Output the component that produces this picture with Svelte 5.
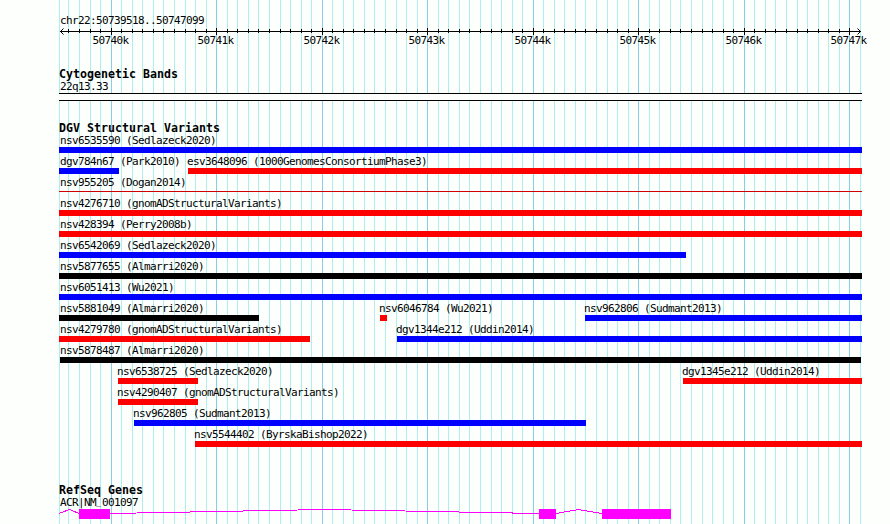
<script>
  const left = 59;
  const right = 862;
  const kb = 105.508;

  // one grid line per 100 bp, a major one per 1000 bp
  const ticks = [];
  for (let i = -5; i <= 71; i++) {
    ticks.push({
      x: Math.max(left, Math.floor(111.2 + (i * kb) / 10)),
      major: i % 10 === 0,
      label: 50740 + i / 10 + 'k'
    });
  }
  const majors = ticks.filter((t) => t.major);
  const inner = ticks.filter((t) => t.x > 62 && t.x < 860);

  const rows = [
    [{ name: 'nsv6535590 (Sedlazeck2020)', start: left, end: right, type: 'loss' }],
    [
      { name: 'dgv784n67 (Park2010)', start: left, end: 119, type: 'loss' },
      { name: 'esv3648096 (1000GenomesConsortiumPhase3)', start: 188, end: right, type: 'gain' }
    ],
    [{ name: 'nsv955205 (Dogan2014)', start: left, end: right, type: 'thin' }],
    [{ name: 'nsv4276710 (gnomADStructuralVariants)', start: left, end: right, type: 'gain' }],
    [{ name: 'nsv428394 (Perry2008b)', start: left, end: right, type: 'gain' }],
    [{ name: 'nsv6542069 (Sedlazeck2020)', start: left, end: 686, type: 'loss' }],
    [{ name: 'nsv5877655 (Almarri2020)', start: left, end: right, type: 'other' }],
    [{ name: 'nsv6051413 (Wu2021)', start: left, end: right, type: 'loss' }],
    [
      { name: 'nsv5881049 (Almarri2020)', start: left, end: 259, type: 'other' },
      { name: 'nsv6046784 (Wu2021)', start: 380, end: 387, type: 'gain' },
      { name: 'nsv962806 (Sudmant2013)', start: 585, end: right, type: 'loss' }
    ],
    [
      { name: 'nsv4279780 (gnomADStructuralVariants)', start: left, end: 310, type: 'gain' },
      { name: 'dgv1344e212 (Uddin2014)', start: 397, end: right, type: 'loss' }
    ],
    [{ name: 'nsv5878487 (Almarri2020)', start: 60, end: 861, type: 'other' }],
    [
      { name: 'nsv6538725 (Sedlazeck2020)', start: 118, end: 198, type: 'gain' },
      { name: 'dgv1345e212 (Uddin2014)', start: 683, end: right, type: 'gain' }
    ],
    [{ name: 'nsv4290407 (gnomADStructuralVariants)', start: 118, end: 198, type: 'gain' }],
    [{ name: 'nsv962805 (Sudmant2013)', start: 134, end: 586, type: 'loss' }],
    [{ name: 'nsv5544402 (ByrskaBishop2022)', start: 195, end: right, type: 'gain' }]
  ];

  const exons = [
    [79, 110],
    [539, 556],
    [602, 671]
  ];
</script>

<div class="browser">
  <svg class="gridlines" width="890" height="524">
    {#each ticks as t}
      <rect class:major={t.major} x={t.x} y="0" width="1" height="524" />
    {/each}
  </svg>

  <div class="ruler">
    <div class="region label">chr22:50739518..50747099</div>
    <svg class="axis" width="890" height="22">
      <g shape-rendering="crispEdges">
        <rect x="60" y="4" width="801" height="1" />
        {#each inner as t}
          <rect x={t.x} y={t.major ? 1 : 2} width="1" height={t.major ? 7 : 4} />
        {/each}
      </g>
      <path d="M63.5 1.5 60.5 4.5 63.5 7.5M857.5 1.5 860.5 4.5 857.5 7.5" />
      {#each majors as t}
        <text x={t.x - 18.4} y="17">{t.label}</text>
      {/each}
    </svg>
  </div>

  <section class="bands">
    <h3>Cytogenetic Bands</h3>
    <div class="label indent">22q13.33</div>
    <div class="band"></div>
  </section>

  <section class="variants">
    <h3>DGV Structural Variants</h3>
    {#each rows as row}
      <div class="row">
        {#each row as v}
          <div class="variant" style="margin-left: {v.start}px">
            <div class="label" class:clipped={v.start === left} class:shifted={v.start > 60}>{v.name}</div>
            <div class="bar {v.type}" style="width: {v.end - v.start}px"></div>
          </div>
        {/each}
      </div>
    {/each}
  </section>

  <section class="genes">
    <h3>RefSeq Genes</h3>
    <div class="label indent">ACR|NM<span class="raised">_</span>001097</div>
    <svg class="gene" width="890" height="14" shape-rendering="crispEdges">
      <path d="M59 4.5 69.5 0.5 79 4.5M110 4.5 324.5 0.5 539 4.5M556 4.5 578.5 0.5 602 4.5" />
      {#each exons as [start, end]}
        <rect x={start} y="0" width={end - start} height="10" />
      {/each}
    </svg>
  </section>
</div>

<style>
  :global(body) {
    background: #fdfffc;
  }

  .browser {
    position: relative;
    width: 890px;
    height: 524px;
    overflow: hidden;
    background: #fdfffc;
    color: #000;
    font-family: 'DejaVu Sans Mono', monospace;
  }

  .gridlines {
    position: absolute;
    top: 0;
    left: 0;
    fill: #afeeee;
  }

  .gridlines .major {
    fill: #87ceeb;
  }

  .ruler,
  section {
    position: relative;
  }

  svg {
    display: block;
  }

  .ruler {
    height: 54px;
    padding-top: 14px;
  }

  .label,
  .axis text {
    font-size: 11px;
    letter-spacing: -0.622px;
    white-space: pre;
  }

  .label {
    height: 13px;
    line-height: 13px;
  }

  .region,
  .indent {
    padding-left: 60px;
  }

  /* keep the underscore clear of the exon below it */
  .raised {
    font-size: 8px;
    letter-spacing: 1.184px;
    line-height: 0;
    vertical-align: 1px;
  }

  .axis path {
    fill: none;
    stroke: #000;
  }

  h3 {
    height: 12px;
    margin: 0 0 0 59px;
    font-size: 11.6px;
    font-weight: bold;
    line-height: 12px;
    letter-spacing: 0.017px;
  }

  .bands {
    height: 54px;
  }

  .band {
    width: 803px;
    height: 8px;
    margin-left: 59px;
    box-sizing: border-box;
    border: solid #000;
    border-width: 1px 0;
    background: #fdfffc;
  }

  .variants {
    height: 362px;
  }

  .row {
    display: grid;
    height: 21px;
  }

  .variant {
    grid-area: 1 / 1;
  }

  .clipped {
    padding-left: 1px;
  }

  .shifted {
    margin-left: -1px;
  }

  .bar {
    height: 6px;
  }

  .gain {
    background: #f00;
  }

  .loss {
    background: #00f;
  }

  .other {
    background: #000;
  }

  .thin {
    height: 1px;
    margin-top: 2px;
    background: #d00000;
  }

  .gene {
    fill: #f0f;
  }

  .gene path {
    fill: none;
    stroke: #f0f;
  }
</style>
